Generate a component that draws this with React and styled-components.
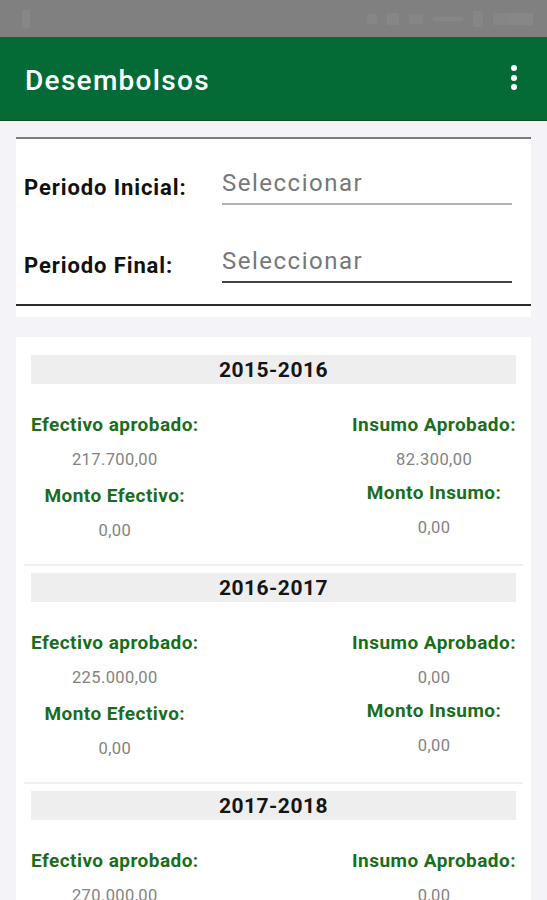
import React from 'react';
import styled, { createGlobalStyle } from 'styled-components';

const Global = createGlobalStyle`
  html, body {
    margin: 0;
    padding: 0;
    background: #f4f4f8;
    font-family: Roboto, "Liberation Sans", sans-serif;
  }
`

const Screen = styled.div`
  width: 547px;
  height: 900px;
  overflow: hidden;
  background: #f4f4f8;
`

const StatusBar = styled.div`
  height: 37px;
  background: #808080;
  display: flex;
  align-items: center;
  justify-content: space-between;
  padding: 0 14px 0 22px;
  box-sizing: border-box;
`

const Faint = styled.div`
  display: flex;
  gap: 10px;
  align-items: center;
  opacity: 0.14;
`

const FaintBlock = styled.span`
  display: block;
  width: ${p => p.w}px;
  height: ${p => p.h}px;
  background: #b0b0b0;
  border-radius: 1px;
`

const AppBar = styled.header`
  height: 84px;
  background: #046b37;
  border-bottom: 1px solid #0b4f22;
  box-sizing: border-box;
  display: flex;
  align-items: center;
  justify-content: space-between;
  padding: 3px 30px 0 25px;
`

const Title = styled.h1`
  margin: 0;
  color: #fff;
  font-size: 28px;
  font-weight: 500;
  letter-spacing: 1.3px;
`

const Dots = styled.div`
  display: flex;
  flex-direction: column;
  gap: 3.5px;
  margin-bottom: 5px;
  & span {
    width: 6px;
    height: 6px;
    border-radius: 50%;
    background: #fff;
  }
`

const Card = styled.section`
  background: #fff;
  margin: ${p => p.mt}px 16px 0;
  padding: ${p => p.pad};
`

const FilterBox = styled.div`
  border-top: 2px solid #7c7c7c;
  border-bottom: 2px solid #2a2a2a;
  padding: 31px 19px 21px 8px;
  display: flex;
  flex-direction: column;
  gap: 43px;
`

const FilterRow = styled.div`
  display: grid;
  grid-template-columns: 198px 1fr;
  align-items: start;
`

const FilterLabel = styled.label`
  padding-top: 6px;
  font-size: 22px;
  font-weight: 700;
  color: #111;
  line-height: 24px;
  letter-spacing: 0.9px;
  white-space: nowrap;
`

const Select = styled.div`
  font-size: 24px;
  line-height: 27px;
  color: #777;
  letter-spacing: 1.5px;
  padding-bottom: 6px;
  border-bottom: 2px solid ${p => p.line};
`

const Section = styled.div`
  display: flex;
  flex-direction: column;
`

const YearBar = styled.div`
  height: 29px;
  background: #eeeeee;
  display: flex;
  align-items: center;
  justify-content: center;
  font-size: 21px;
  font-weight: 700;
  color: #151515;
  letter-spacing: 0.5px;
`

const Columns = styled.div`
  display: flex;
  justify-content: space-between;
  padding-top: 30px;
`

const Column = styled.div`
  display: flex;
  flex-direction: column;
  align-items: center;
`

const Label = styled.div`
  font-size: 19px;
  line-height: 22px;
  font-weight: 700;
  color: #1b6d1e;
  letter-spacing: 0.45px;
  margin-top: ${p => p.mt || 0}px;
`

const Value = styled.div`
  font-size: 16.5px;
  line-height: 20px;
  color: #828282;
  margin-top: 14px;
  letter-spacing: 0.4px;
`

const Divider = styled.hr`
  border: none;
  height: 2px;
  background: #f0f0f0;
  margin: 23px -7px 7px;
`

const sections = [
  { year: '2015-2016', ea: '217.700,00', me: '0,00', ia: '82.300,00', mi: '0,00' },
  { year: '2016-2017', ea: '225.000,00', me: '0,00', ia: '0,00', mi: '0,00' },
  { year: '2017-2018', ea: '270.000,00', me: '0,00', ia: '0,00', mi: '0,00' },
]

export default function App() {
  return (
    <Screen>
      <Global />
      <StatusBar>
        <Faint>
          <FaintBlock w={8} h={18} />
        </Faint>
        <Faint>
          <FaintBlock w={10} h={10} />
          <FaintBlock w={12} h={12} />
          <FaintBlock w={14} h={10} />
          <FaintBlock w={30} h={4} />
          <FaintBlock w={10} h={16} />
          <FaintBlock w={40} h={12} />
        </Faint>
      </StatusBar>
      <AppBar>
        <Title>Desembolsos</Title>
        <Dots><span /><span /><span /></Dots>
      </AppBar>

      <Card mt={16} pad="0 0 11px">
        <FilterBox>
          <FilterRow>
            <FilterLabel>Periodo Inicial:</FilterLabel>
            <Select line="#b0b0b0">Seleccionar</Select>
          </FilterRow>
          <FilterRow>
            <FilterLabel>Periodo Final:</FilterLabel>
            <Select line="#444">Seleccionar</Select>
          </FilterRow>
        </FilterBox>
      </Card>

      <Card mt={20} pad="18px 15px 0">
        {sections.map(s => (
          <Section key={s.year}>
            <YearBar>{s.year}</YearBar>
            <Columns>
              <Column>
                <Label>Efectivo aprobado:</Label>
                <Value>{s.ea}</Value>
                <Label mt={15}>Monto Efectivo:</Label>
                <Value>{s.me}</Value>
              </Column>
              <Column>
                <Label>Insumo Aprobado:</Label>
                <Value>{s.ia}</Value>
                <Label mt={12}>Monto Insumo:</Label>
                <Value>{s.mi}</Value>
              </Column>
            </Columns>
            <Divider />
          </Section>
        ))}
      </Card>
    </Screen>
  );
}
